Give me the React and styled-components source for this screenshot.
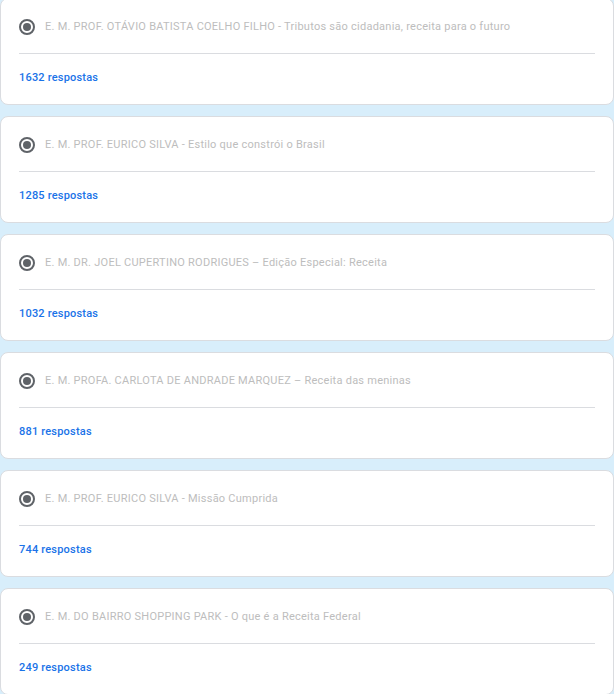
import React from "react";
import styled, { createGlobalStyle } from "styled-components";

const Global = createGlobalStyle`
  html, body { margin: 0; padding: 0; background: #d8eefb; }
  body { font-family: Roboto, "Noto Sans", Arial, sans-serif; overflow: hidden; }
`;

const List = styled.div`
  display: flex;
  flex-direction: column;
  gap: 11px;
  margin-top: -2px;
`;

const Card = styled.div`
  background: #fff;
  border: 1px solid #dadce0;
  border-radius: 8px;
  height: 107px;
  box-sizing: border-box;
  padding: 0 18px;
  display: flex;
  flex-direction: column;
`;

const OptionRow = styled.div`
  display: flex;
  align-items: center;
  gap: 10px;
  height: 55px;
  border-bottom: 1px solid #dadce0;
  box-sizing: border-box;
  padding-top: 1px;
`;

const Radio = styled.span`
  width: 16px;
  height: 16px;
  box-sizing: border-box;
  border: 2px solid #5f6368;
  border-radius: 50%;
  display: flex;
  align-items: center;
  justify-content: center;
  flex-shrink: 0;
  &::after {
    content: "";
    width: 8px;
    height: 8px;
    border-radius: 50%;
    background: #5f6368;
  }
`;

const Label = styled.span`
  font-size: 11px;
  color: #bdbdbd;
  letter-spacing: 0.25px;
`;

const Count = styled.div`
  font-size: 11px;
  font-weight: 500;
  color: #1a73e8;
  margin-top: 17px;
  letter-spacing: 0.2px;
`;

const items = [
  ["E. M. PROF. OTÁVIO BATISTA COELHO FILHO - Tributos são cidadania, receita para o futuro", 1632],
  ["E. M. PROF. EURICO SILVA - Estilo que constrói o Brasil", 1285],
  ["E. M. DR. JOEL CUPERTINO RODRIGUES – Edição Especial: Receita", 1032],
  ["E. M. PROFA. CARLOTA DE ANDRADE MARQUEZ – Receita das meninas", 881],
  ["E. M. PROF. EURICO SILVA - Missão Cumprida", 744],
  ["E. M. DO BAIRRO SHOPPING PARK - O que é a Receita Federal", 249],
];

export default function App() {
  return (
    <>
      <Global />
      <List>
        {items.map(([label, n]) => (
          <Card key={label}>
            <OptionRow>
              <Radio />
              <Label>{label}</Label>
            </OptionRow>
            <Count>{n} respostas</Count>
          </Card>
        ))}
      </List>
    </>
  );
}
